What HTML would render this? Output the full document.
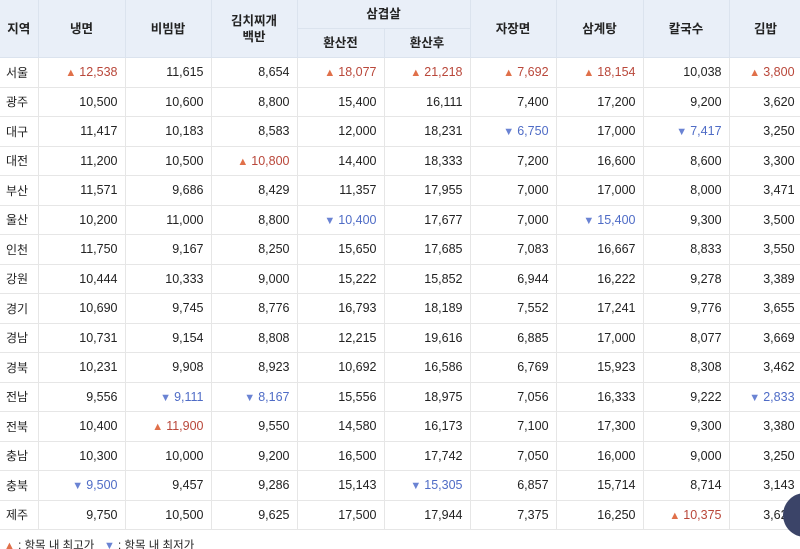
<!DOCTYPE html>
<html><head><meta charset="utf-8"><style>
html,body{margin:0;padding:0;background:#fff;width:800px;height:549px;overflow:hidden;position:relative}
body{font-family:"Liberation Sans","Noto Sans CJK KR",sans-serif;font-size:12px;color:#222}
table{border-collapse:collapse;table-layout:fixed;width:802px;position:absolute;left:0;top:0}
th{background:#e9eff8;font-weight:bold;font-size:12.5px;color:#222;border:1px solid #dbe3ee;border-top:none;text-align:center;padding:0;line-height:16px}
td{border:1px solid #e6e6e6;height:28.5px;padding:0 7px;text-align:right;font-size:12.5px;white-space:nowrap}
td:first-child{text-align:left;padding-left:6px;font-size:12px}
th:first-child,td:first-child{border-left:none}
tr.h1 th{height:28px}
tr.h2 th{height:28px}
.u{color:#b9473a}.u::before{content:"▲ ";color:#e0704a;font-size:11px}
.d{color:#4f6cc6}.d::before{content:"▼ ";color:#6a83d3;font-size:11px}
.leg{position:absolute;left:4px;top:537px;font-size:11.5px;color:#222}
.leg .a{color:#e0704a;font-size:11px}.leg .b{color:#6a83d3;font-size:11px}
.circ{position:absolute;left:783px;top:493px;width:44px;height:44px;border-radius:50%;background:#3b4468}
</style></head><body>
<table>
<colgroup><col style="width:38px"><col style="width:87px"><col style="width:86px"><col style="width:86px"><col style="width:87px"><col style="width:86px"><col style="width:86px"><col style="width:87px"><col style="width:86px"><col style="width:73px"></colgroup>
<tr class="h1"><th rowspan="2">지역</th><th rowspan="2">냉면</th><th rowspan="2">비빔밥</th><th rowspan="2">김치찌개<br>백반</th><th colspan="2">삼겹살</th><th rowspan="2">자장면</th><th rowspan="2">삼계탕</th><th rowspan="2">칼국수</th><th rowspan="2">김밥</th></tr>
<tr class="h2"><th>환산전</th><th>환산후</th></tr>
<tr><td>서울</td><td class="u">12,538</td><td>11,615</td><td>8,654</td><td class="u">18,077</td><td class="u">21,218</td><td class="u">7,692</td><td class="u">18,154</td><td>10,038</td><td class="u">3,800</td></tr>
<tr><td>광주</td><td>10,500</td><td>10,600</td><td>8,800</td><td>15,400</td><td>16,111</td><td>7,400</td><td>17,200</td><td>9,200</td><td>3,620</td></tr>
<tr><td>대구</td><td>11,417</td><td>10,183</td><td>8,583</td><td>12,000</td><td>18,231</td><td class="d">6,750</td><td>17,000</td><td class="d">7,417</td><td>3,250</td></tr>
<tr><td>대전</td><td>11,200</td><td>10,500</td><td class="u">10,800</td><td>14,400</td><td>18,333</td><td>7,200</td><td>16,600</td><td>8,600</td><td>3,300</td></tr>
<tr><td>부산</td><td>11,571</td><td>9,686</td><td>8,429</td><td>11,357</td><td>17,955</td><td>7,000</td><td>17,000</td><td>8,000</td><td>3,471</td></tr>
<tr><td>울산</td><td>10,200</td><td>11,000</td><td>8,800</td><td class="d">10,400</td><td>17,677</td><td>7,000</td><td class="d">15,400</td><td>9,300</td><td>3,500</td></tr>
<tr><td>인천</td><td>11,750</td><td>9,167</td><td>8,250</td><td>15,650</td><td>17,685</td><td>7,083</td><td>16,667</td><td>8,833</td><td>3,550</td></tr>
<tr><td>강원</td><td>10,444</td><td>10,333</td><td>9,000</td><td>15,222</td><td>15,852</td><td>6,944</td><td>16,222</td><td>9,278</td><td>3,389</td></tr>
<tr><td>경기</td><td>10,690</td><td>9,745</td><td>8,776</td><td>16,793</td><td>18,189</td><td>7,552</td><td>17,241</td><td>9,776</td><td>3,655</td></tr>
<tr><td>경남</td><td>10,731</td><td>9,154</td><td>8,808</td><td>12,215</td><td>19,616</td><td>6,885</td><td>17,000</td><td>8,077</td><td>3,669</td></tr>
<tr><td>경북</td><td>10,231</td><td>9,908</td><td>8,923</td><td>10,692</td><td>16,586</td><td>6,769</td><td>15,923</td><td>8,308</td><td>3,462</td></tr>
<tr><td>전남</td><td>9,556</td><td class="d">9,111</td><td class="d">8,167</td><td>15,556</td><td>18,975</td><td>7,056</td><td>16,333</td><td>9,222</td><td class="d">2,833</td></tr>
<tr><td>전북</td><td>10,400</td><td class="u">11,900</td><td>9,550</td><td>14,580</td><td>16,173</td><td>7,100</td><td>17,300</td><td>9,300</td><td>3,380</td></tr>
<tr><td>충남</td><td>10,300</td><td>10,000</td><td>9,200</td><td>16,500</td><td>17,742</td><td>7,050</td><td>16,000</td><td>9,000</td><td>3,250</td></tr>
<tr><td>충북</td><td class="d">9,500</td><td>9,457</td><td>9,286</td><td>15,143</td><td class="d">15,305</td><td>6,857</td><td>15,714</td><td>8,714</td><td>3,143</td></tr>
<tr><td>제주</td><td>9,750</td><td>10,500</td><td>9,625</td><td>17,500</td><td>17,944</td><td>7,375</td><td>16,250</td><td class="u">10,375</td><td>3,625</td></tr>
</table>
<div class="leg"><span class="a">▲</span> : 항목 내 최고가 &nbsp;&nbsp;<span class="b">▼</span> : 항목 내 최저가</div>
<div class="circ"></div>
</body></html>
